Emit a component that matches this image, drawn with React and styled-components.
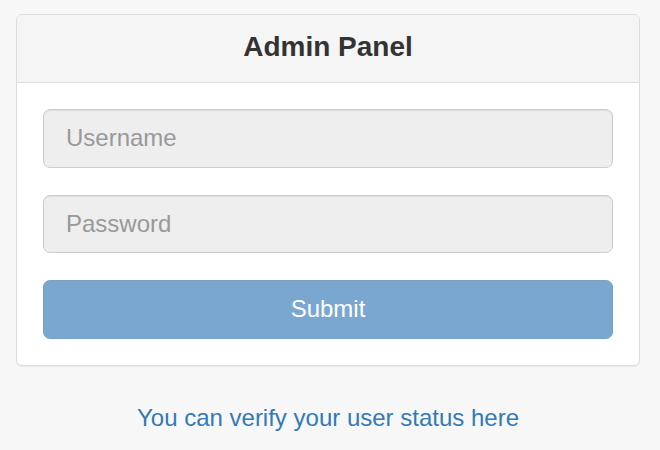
import React from "react";
import styled, { createGlobalStyle } from "styled-components";

const GlobalStyle = createGlobalStyle`
  html, body {
    margin: 0;
    padding: 0;
    background: #f7f7f7;
    font-family: "Liberation Sans", Arial, sans-serif;
  }
  * { box-sizing: border-box; }
`;

const Page = styled.div`
  padding: 14px 20px 0 16px;
  width: 660px;
`;

const Wrapper = styled.div`
  width: 624px;
`;

const Panel = styled.div`
  background: #fff;
  border: 1px solid #ddd;
  border-radius: 6px;
  box-shadow: 0 1px 1px rgba(0, 0, 0, 0.05);
  overflow: hidden;
`;

const PanelHeading = styled.div`
  background: #f5f5f5;
  border-bottom: 1px solid #ddd;
  padding: 15px 0 18px;
  text-align: center;
`;

const Title = styled.h3`
  margin: 0;
  font-size: 28px;
  line-height: 34px;
  font-weight: 700;
  color: #333;
`;

const PanelBody = styled.form`
  padding: 26px 26px 26.5px;
  display: flex;
  flex-direction: column;
  gap: 27px;
`;

const Input = styled.input`
  display: block;
  width: 100%;
  height: 58.5px;
  padding: 0 22px;
  font-family: "Liberation Sans", Arial, sans-serif;
  font-size: 24px;
  color: #555;
  background: #eee;
  border: 1px solid #ccc;
  border-radius: 7px;
  box-shadow: inset 0 1px 1px rgba(0, 0, 0, 0.075);
  outline: none;
  &::placeholder {
    color: #999;
    opacity: 1;
  }
`;

const SubmitButton = styled.button`
  display: block;
  width: 100%;
  height: 58.5px;
  font-family: "Liberation Sans", Arial, sans-serif;
  font-size: 24px;
  color: #fff;
  background: #7aa7d0;
  border: 1px solid #77a1c6;
  border-radius: 7px;
  cursor: not-allowed;
`;

const StatusLink = styled.a`
  display: block;
  margin-top: 35px;
  text-align: center;
  font-size: 24px;
  line-height: 34px;
  color: #337ab7;
  text-decoration: none;
`;

export default function App() {
  return (
    <>
      <GlobalStyle />
      <Page>
        <Wrapper>
          <Panel>
            <PanelHeading>
              <Title>Admin Panel</Title>
            </PanelHeading>
            <PanelBody onSubmit={(e) => e.preventDefault()}>
              <Input type="text" placeholder="Username" disabled />
              <Input type="password" placeholder="Password" disabled />
              <SubmitButton type="submit" disabled>
                Submit
              </SubmitButton>
            </PanelBody>
          </Panel>
          <StatusLink href="#">You can verify your user status here</StatusLink>
        </Wrapper>
      </Page>
    </>
  );
}
